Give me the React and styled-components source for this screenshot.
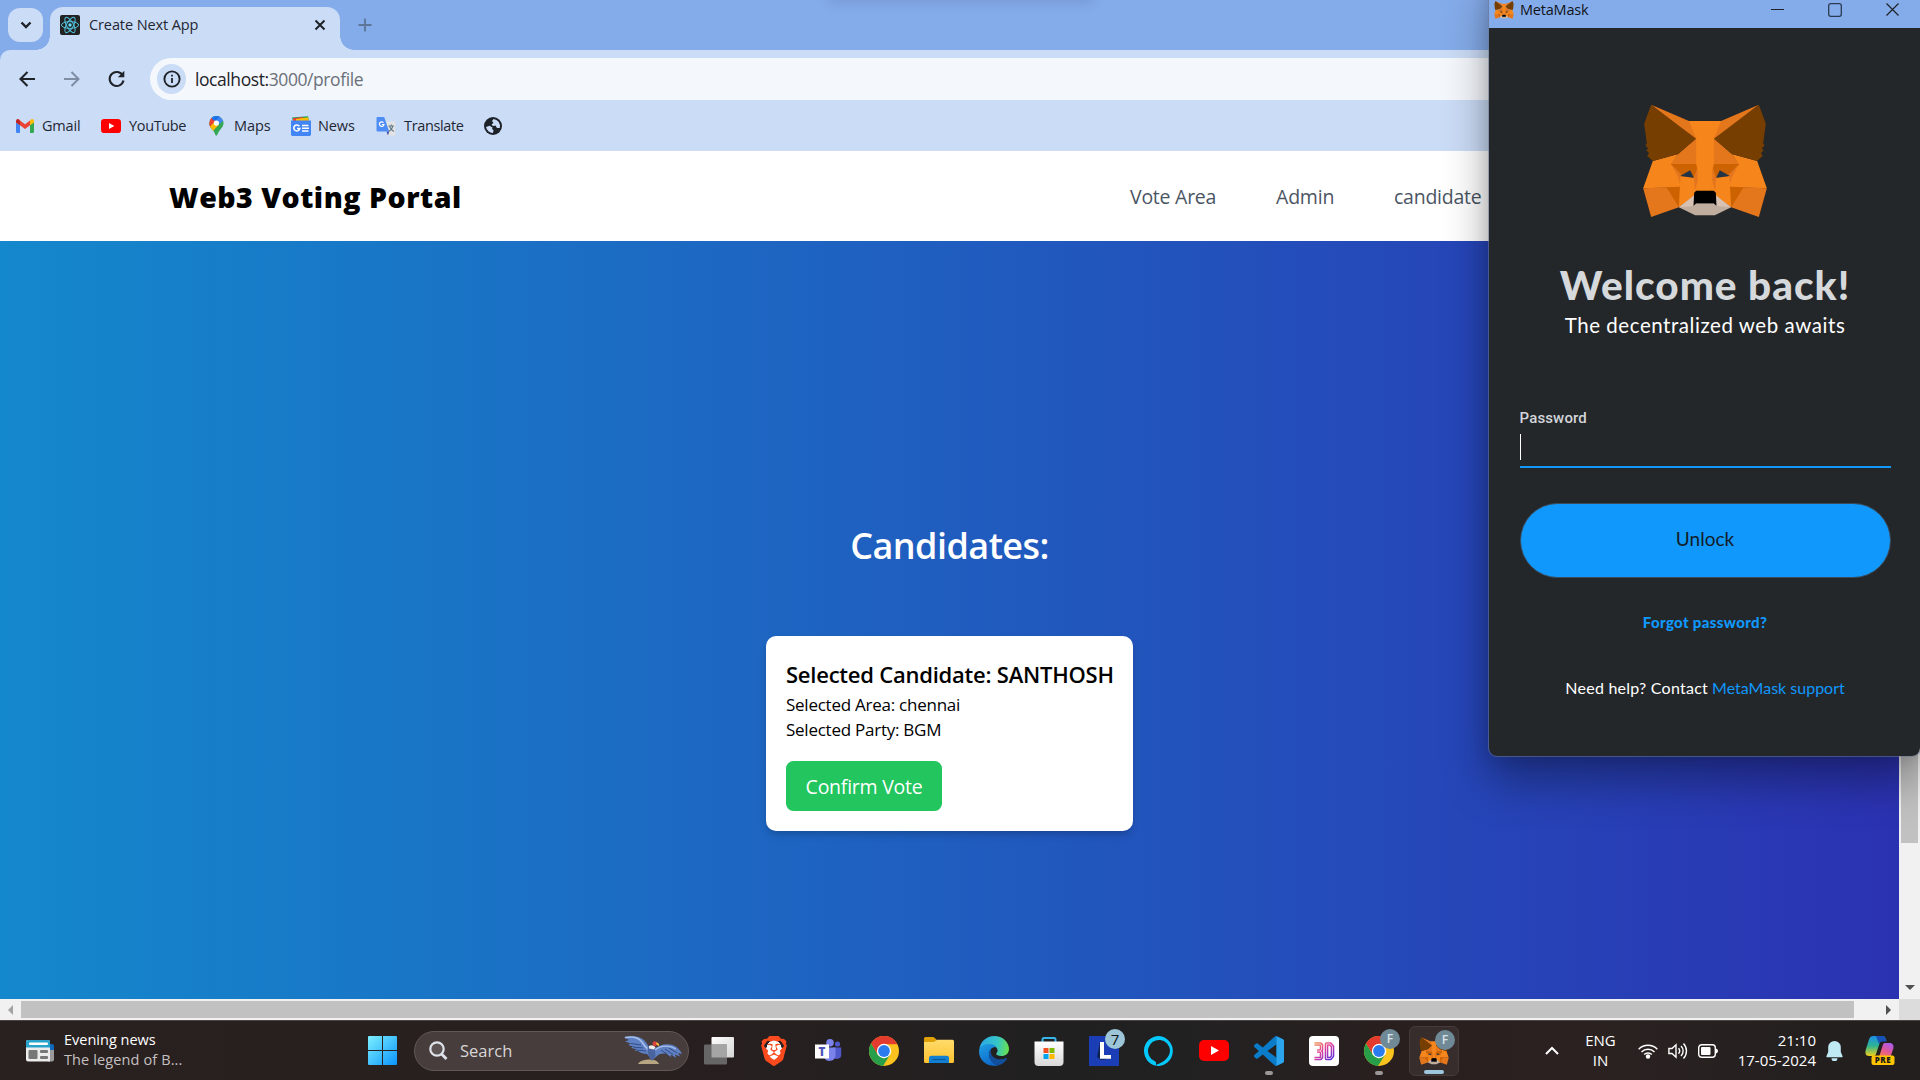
import React from "react";
import styled, { createGlobalStyle, css } from "styled-components";
import { SiBrave } from "react-icons/si";

const ui = `"Open Sans", "Noto Sans", sans-serif`;
const geo = `Lato, "Open Sans", sans-serif`;

const GlobalStyle = createGlobalStyle`
  * { box-sizing: border-box; }
  html, body { margin: 0; padding: 0; overflow: hidden; }
  body { font-family: ${ui}; }
  h1, h2, h3, p { margin: 0; font-weight: inherit; }
  svg { display: block; flex: none; }
  button { font-family: inherit; border: 0; padding: 0; }
`;

const Desktop = styled.div`
  position: relative;
  display: flex;
  flex-direction: column;
  width: 1920px;
  height: 1080px;
  overflow: hidden;
  background: #85acea;
`;

/* ---------- text ---------- */
const Label = styled.span`
  white-space: nowrap;
  line-height: ${(p) => p.$lh || "20px"};
  font-size: ${(p) => p.$size}px;
  letter-spacing: ${(p) => p.$track || 0}px;
  color: ${(p) => p.$color || "inherit"};
  font-weight: ${(p) => p.$weight || 400};
`;

/* ---------- browser chrome ---------- */
const TabStrip = styled.div`
  position: relative;
  display: flex;
  align-items: flex-start;
  height: 50px;
  flex: none;
  padding: 8px 0 0 8px;
  background: #85acea;
`;

const SnapHint = styled.div`
  position: absolute;
  left: 830px;
  top: -12px;
  width: 262px;
  height: 10px;
  border-radius: 8px;
  box-shadow: 0 2px 12px 4px rgba(70, 95, 140, 0.2);
`;

const TabSearch = styled.div`
  display: flex;
  align-items: center;
  justify-content: center;
  width: 35px;
  height: 34px;
  margin-right: 7px;
  border-radius: 12px;
  background: #cbdcf6;
`;

const Tab = styled.div`
  position: relative;
  display: flex;
  align-items: center;
  width: 290px;
  height: 43px;
  margin-top: -1px;
  padding: 0 13px 7px 10px;
  border-radius: 13px 13px 0 0;
  background: #cbdcf6;
  &::before,
  &::after {
    content: "";
    position: absolute;
    bottom: 0;
    width: 14px;
    height: 14px;
  }
  &::before {
    left: -14px;
    background: radial-gradient(circle at 0 0, transparent 13.5px, #cbdcf6 14px);
  }
  &::after {
    right: -14px;
    background: radial-gradient(circle at 100% 0, transparent 13.5px, #cbdcf6 14px);
  }
`;

const TabTitle = styled.div`
  display: flex;
  flex: 1;
  padding-left: 9px;
  color: #1f2733;
`;

const NewTab = styled.div`
  padding: 10px 0 0 18px;
`;

const Toolbar = styled.div`
  display: flex;
  align-items: center;
  height: 58px;
  flex: none;
  padding-left: 18px;
  border-radius: 10px 0 0 0;
  background: #cbdcf6;
`;

const NavIcons = styled.div`
  display: flex;
  align-items: center;
  gap: 27px;
  width: 132px;
`;

const Omnibox = styled.div`
  display: flex;
  align-items: center;
  flex: 1;
  height: 42px;
  padding-left: 7px;
  border-radius: 21px 0 0 21px;
  background: #f4f7fc;
`;

const InfoChip = styled.div`
  display: flex;
  align-items: center;
  justify-content: center;
  width: 29px;
  height: 30px;
  margin-right: 9px;
  border-radius: 15px;
  background: #cbdcf6;
`;

const Bookmarks = styled.div`
  display: flex;
  align-items: center;
  height: 43px;
  flex: none;
  padding: 0 0 7px 16px;
  background: #cbdcf6;
  color: #1f2733;
`;

const Bookmark = styled.div`
  display: flex;
  align-items: center;
  width: ${(p) => p.$width}px;
  gap: ${(p) => p.$gap}px;
`;

/* ---------- web page ---------- */
const Viewport = styled.div`
  display: grid;
  grid-template-columns: 1899px 21px;
  grid-template-rows: 848px 21px;
  flex: none;
`;

const Page = styled.div`
  display: flex;
  flex-direction: column;
  overflow: hidden;
`;

const SiteHeader = styled.header`
  display: flex;
  align-items: center;
  flex: none;
  height: 90px;
  padding: 2px 0 0 169px;
  background: #fff;
`;

const Brand = styled.h1`
  display: flex;
  width: 961px;
  color: #000;
`;

const SiteNav = styled.nav`
  display: flex;
  color: #4b5563;
`;

const NavItem = styled.div`
  display: flex;
  width: ${(p) => p.$width}px;
`;

const Hero = styled.main`
  display: flex;
  flex-direction: column;
  align-items: center;
  flex: 1;
  padding-top: 282px;
  background: linear-gradient(to right, #1488cc, #2b32b2);
`;

const HeroTitle = styled.h2`
  display: flex;
  height: 45px;
  margin-bottom: 68px;
  color: #fff;
`;

const Card = styled.section`
  display: flex;
  flex-direction: column;
  align-items: flex-start;
  width: 367px;
  height: 195px;
  padding: 20px;
  border-radius: 10px;
  background: #fff;
  color: #000;
  box-shadow: 0 5px 8px -1px rgba(0, 0, 0, 0.14), 0 3px 5px -2px rgba(0, 0, 0, 0.1);
`;

const ConfirmButton = styled.button`
  display: flex;
  align-items: center;
  justify-content: center;
  width: 156px;
  height: 50px;
  margin-top: 19px;
  padding-top: 2px;
  border-radius: 7.5px;
  background: #22c55e;
  color: #fff;
`;

const VScroll = styled.div`
  display: flex;
  flex-direction: column;
  justify-content: space-between;
  align-items: center;
  background: #f1f1f1;
  padding-bottom: 9px;
`;

const VThumb = styled.div`
  width: 17px;
  height: 692px;
  background: #c1c1c1;
`;

const HScroll = styled.div`
  display: flex;
  align-items: center;
  justify-content: space-between;
  padding: 0 8px;
  background: #f1f1f1;
`;

const HThumb = styled.div`
  width: 1833px;
  height: 17px;
  margin: 0 auto 0 8px;
  background: #c1c1c1;
`;

const Corner = styled.div`
  background: #dcdcdc;
`;

/* ---------- wallet window ---------- */
const WalletWindow = styled.aside`
  position: absolute;
  left: 1488px;
  top: -2px;
  width: 433px;
  height: 759px;
  display: flex;
  flex-direction: column;
  overflow: hidden;
  border: 1px solid rgba(110, 122, 150, 0.55);
  border-radius: 0 0 9px 9px;
  background: #24272a;
  background-clip: padding-box;
`;

const WalletShadow = styled.div`
  position: absolute;
  left: 1489px;
  top: -30px;
  width: 431px;
  height: 786px;
  border-radius: 9px;
  box-shadow: 0 24px 46px 0 rgba(0, 0, 0, 0.36), 0 0 18px rgba(0, 0, 0, 0.14);
`;

const WalletTitleBar = styled.div`
  display: flex;
  align-items: center;
  flex: none;
  height: 29px;
  padding: 0 21px 8px 5px;
  background: #85acea;
  color: #101418;
`;

const WalletName = styled.div`
  display: flex;
  flex: 1;
  padding-left: 6px;
`;

const WindowButtons = styled.div`
  display: flex;
  align-items: center;
  gap: 44px;
`;

const WalletBody = styled.div`
  display: flex;
  flex-direction: column;
  align-items: center;
  padding: 76px 29px 0 30px;
  font-family: ${geo};
`;

const WalletHeading = styled.h1`
  display: flex;
  margin-top: 43px;
  color: #d6d9dc;
`;

const WalletTagline = styled.p`
  display: flex;
  color: #fff;
`;

const PasswordField = styled.div`
  display: flex;
  flex-direction: column;
  align-items: flex-start;
  width: 371px;
  height: 60px;
  margin-top: 67px;
  border-bottom: 2px solid #1098fc;
  font-family: Roboto, sans-serif;
  color: #d2d5d9;
`;

const Caret = styled.div`
  width: 1px;
  height: 26px;
  margin-top: 6px;
  background: #fff;
`;

const UnlockButton = styled.button`
  display: flex;
  align-items: center;
  justify-content: center;
  width: 371px;
  height: 75px;
  margin-top: 35px;
  padding-bottom: 4px;
  border: 1px solid #3b4a59;
  border-radius: 38px;
  background: #1098fc;
  color: #141d28;
`;

const WalletLink = styled.div`
  display: flex;
  margin-top: ${(p) => p.$top}px;
  gap: 4px;
  color: #1098fc;
`;

/* ---------- taskbar ---------- */
const Taskbar = styled.footer`
  display: flex;
  align-items: center;
  flex: 1;
  border-top: 1px solid #4a4544;
  background: linear-gradient(to right, #292020, #281f1f 35%, #212021 54%, #222122 62%, #2a1f1e 74%, #2a2221 84%, #231f1f 96%);
  color: #fff;
`;

const Widgets = styled.div`
  display: flex;
  align-items: center;
  gap: 10px;
  width: 368px;
  padding-left: 26px;
`;

const Stack = styled.div`
  display: flex;
  flex-direction: column;
  align-items: ${(p) => p.$align || "flex-start"};
  padding-bottom: 2px;
`;

const SearchBox = styled.div`
  display: flex;
  align-items: center;
  width: 275px;
  height: 40px;
  margin: 0 2px 0 17px;
  padding: 0 6px 0 14px;
  border: 1px solid #605857;
  border-radius: 20px;
  background: #463d3c;
`;

const SearchText = styled.div`
  display: flex;
  flex: 1;
  padding-left: 12px;
  color: #d9d6d6;
`;

const TaskIcons = styled.div`
  display: flex;
  align-items: center;
`;

const TaskButton = styled.div`
  position: relative;
  display: flex;
  align-items: center;
  justify-content: center;
  width: 55px;
  height: 50px;
  ${(p) =>
    p.$active &&
    css`
      width: 50px;
      margin-left: 3px;
      border: 1px solid #453b3a;
      border-radius: 6px;
      background: #372d2c;
    `}
`;

const Indicator = styled.i`
  position: absolute;
  bottom: 1px;
  left: 50%;
  width: ${(p) => (p.$wide ? 20 : 8)}px;
  height: 4px;
  transform: translateX(-50%);
  border-radius: 2px;
  background: ${(p) => (p.$wide ? "#9dc6dd" : "#9a9796")};
`;

const Badge = styled.b`
  position: absolute;
  top: 3px;
  right: ${(p) => p.$right}px;
  display: flex;
  align-items: center;
  justify-content: center;
  width: 20px;
  height: 20px;
  border-radius: 50%;
  font-weight: ${(p) => (p.$count ? 400 : 600)};
  font-size: ${(p) => (p.$count ? 15 : 12)}px;
  background: ${(p) => (p.$count ? "#9cc5d8" : "#6f8a96")};
  color: ${(p) => (p.$count ? "#10151a" : "#dbe3e7")};
`;

const Tray = styled.div`
  display: flex;
  align-items: center;
  margin-left: auto;
  padding-right: 25px;
`;

const TraySlot = styled.div`
  display: flex;
  align-items: center;
  gap: 10px;
  margin-left: ${(p) => p.$before}px;
`;

/* ---------- icons ---------- */
const FoxHalf = () => (
  <g>
    <path d="M97 44 212 94 236 146 230 150Z" fill="#e4761b" />
    <path d="M178 192 230 146 240 146 240 224 155 222Z" fill="#e4761b" />
    <path d="M102 213 178 192 157 222 186 256 187 292 73 295Z" fill="#f6851b" />
    <path d="M157 222H240L238 270 183 262Z" fill="#cd6200" />
    <path d="M157 222 188 254 186 292 178 262Z" fill="#e4751f" />
    <path d="M73 295 186 290 180 352 97 381Z" fill="#e4761b" />
    <path d="M143 292 187 290 180 352Z" fill="#cd6200" />
    <path d="M185 258 225 264 240 270V310L180 352Z" fill="#f6851b" />
    <path d="M184 258 214 241 225 263Z" fill="#233447" />
    <path d="M225 264 236 232 238 268 228 303Z" fill="#e4751f" />
    <path d="M180 352 228 314 230 350 200 358Z" fill="#d7c1b3" />
    <path
      d="M97 44 232 146 178 192 102 213 85 197 91 190 82 181 88 176 80 166 84 160 76 101Z"
      fill="#763e00"
    />
  </g>
);

const Fox = ({ width, height }) => (
  <svg width={width} height={height} viewBox="69.500 42 378 342" preserveAspectRatio="none">
    <FoxHalf />
    <g transform="translate(517 0) scale(-1 1)">
      <FoxHalf />
    </g>
    <path d="M210 93H307L285 146V222L281 240 279 303H238L236 240 232 222V146Z" fill="#f6851b" />
    <path d="M180 352 224 348 232 340H285L293 348 337 352 288 376H229Z" fill="#c0ad9e" />
    <path d="M232 302H285L291 308 293 348 285 340H232L224 348 226 308Z" fill="#000" />
  </svg>
);

const ReactMark = () => (
  <svg width="20" height="20" viewBox="0 0 20 20">
    <rect width="20" height="20" rx="2" fill="#222" />
    <g fill="none" stroke="#53c1dc" strokeWidth="1">
      <ellipse cx="10" cy="10" rx="8.6" ry="3.4" />
      <ellipse cx="10" cy="10" rx="8.6" ry="3.4" transform="rotate(60 10 10)" />
      <ellipse cx="10" cy="10" rx="8.6" ry="3.4" transform="rotate(120 10 10)" />
    </g>
    <circle cx="10" cy="10" r="1.7" fill="#61dafb" />
  </svg>
);

const Gmail = () => (
  <svg width="18" height="14" viewBox="0 0 18 14">
    <path d="M0 3V12.7A1.3 1.3 0 0 0 1.3 14H4V6Z" fill="#4285f4" />
    <path d="M18 3V12.7A1.3 1.3 0 0 1 16.7 14H14V6Z" fill="#34a853" />
    <path d="M4 1.4 9 5.2 14 1.4V6.2L9 10 4 6.2Z" fill="#ea4335" />
    <path d="M0 2.2C0 .2 2.2-.6 3.6.9L4 1.4V6.2L0 3.4Z" fill="#c5221f" />
    <path d="M18 2.2C18 .2 15.8-.6 14.4.9L14 1.4V6.2L18 3.4Z" fill="#fbbc04" />
  </svg>
);

const YouTube = ({ width, height }) => (
  <svg width={width} height={height} viewBox="0 0 30 21" preserveAspectRatio="none">
    <rect width="30" height="21" rx="5" fill="#f00" />
    <path d="M12 6 20 10.5 12 15Z" fill="#fff" />
  </svg>
);

const MapsPin = () => (
  <svg width="15" height="20" viewBox="0 0 15 20">
    <clipPath id="pin">
      <path d="M7.5 0A7.2 7.2 0 0 1 14.5 7.2C14.5 11 11.6 12.8 9.6 16 8.6 17.6 8.4 19.7 7.2 19.7 6.2 19.7 6 17.5 5 15.8 3.4 13 .3 11.3.3 7.2A7.2 7.2 0 0 1 7.5 0Z" />
    </clipPath>
    <g clipPath="url(#pin)">
      <rect width="15" height="20" fill="#34a853" />
      <path d="M0 0H15V4L9 9 2 2Z" fill="#4285f4" />
      <path d="M-1 1 3 2 7.5 6 1 14-1 10Z" fill="#ea4335" />
      <path d="M0 11.5 6 5.5 9.5 9 3 16Z" fill="#fbbc04" />
      <path d="M2 0H11L7 4.5 4 4.2Z" fill="#1a73e8" />
    </g>
    <circle cx="7.4" cy="7.1" r="2.6" fill="#fff" />
  </svg>
);

const News = () => (
  <svg width="20" height="20" viewBox="0 0 20 20">
    <path d="M1 1.5 17 .2 18 5H2Z" fill="#0c9d58" />
    <path d="M2 2.2 12 1 14 5H2Z" fill="#ea4335" />
    <path d="M5 3 17 1.2 18 5H5Z" fill="#fbbc04" />
    <path d="M0 4.4H20V18.6A1.4 1.4 0 0 1 18.6 20H1.4A1.4 1.4 0 0 1 0 18.6Z" fill="#4285f4" />
    <path d="M8.3 10.2A3 3 0 1 0 8.8 12.5H6" fill="none" stroke="#fff" strokeWidth="1.6" />
    <path d="M11 9.6H17.5M11 12.3H18M11 15H17.5" stroke="#fff" strokeWidth="1.5" />
  </svg>
);

const Translate = () => (
  <svg width="20" height="19" viewBox="0 0 20 19">
    <path d="M8 4.5H18.2A1 1 0 0 1 19.2 5.5V17.5A1 1 0 0 1 18.2 18.5H11.5Z" fill="#e3e3e3" />
    <path d="M12.5 9H18M15.2 7.6V9M16.8 9C16.4 11.5 15 13.3 12.5 14.6M13.6 9.5C14.5 12 16 13.6 18 14.6" fill="none" stroke="#607988" strokeWidth="1.1" />
    <path d="M10.5 14.6H13.2L12 18.5Z" fill="#3949ab" />
    <path d="M1.5 0H8.2L13.2 14.6H1.5A1 1 0 0 1 .5 13.6V1A1 1 0 0 1 1.5 0Z" fill="#4f8df6" />
    <path d="M7.5 5.6A2.3 2.3 0 1 0 8 7.5H5.8" fill="none" stroke="#fff" strokeWidth="1.2" />
  </svg>
);

const Globe = () => (
  <svg width="18" height="18" viewBox="0 0 18 18">
    <circle cx="9" cy="9" r="9" fill="#1d2229" />
    <path d="M2 10 5.5 8.7 8.5 10.5 8 12 9.5 13 9 16A7.2 7.2 0 0 1 2 10ZM9.5 2 8 4 9.5 6 7.5 7.5 9 9 11.5 8.6 13 11H15.8A7.2 7.2 0 0 0 9.5 2Z" fill="#cbdcf6" />
  </svg>
);

const Line = ({ size = 20, h, d, color = "#1f2328", w = 2 }) => (
  <svg width={size} height={h || size} viewBox={`0 0 ${size} ${h || size}`} fill="none" stroke={color} strokeWidth={w}>
    <path d={d} />
  </svg>
);

const Reload = () => (
  <svg width="18" height="18" viewBox="0 0 18 18">
    <path d="M14.8 5.6A7 7 0 1 0 15.5 10.5" fill="none" stroke="#1f2328" strokeWidth="2.1" />
    <path d="M16.3.8V7.2H9.8Z" fill="#1f2328" />
  </svg>
);

const Info = () => (
  <svg width="18" height="18" viewBox="0 0 18 18">
    <circle cx="9" cy="9" r="7.6" fill="none" stroke="#1f2328" strokeWidth="1.9" />
    <path d="M9 8V13M9 4.8V6.6" stroke="#1f2328" strokeWidth="1.8" />
  </svg>
);

const NewsWidget = () => (
  <svg width="28" height="22" viewBox="0 0 28 22">
    <path d="M22 4H26A2 2 0 0 1 28 6V11H22Z" fill="#1268b8" />
    <path d="M22 10H28V19A2 2 0 0 1 26 21.5H22Z" fill="#9a9a9a" />
    <path d="M0 2A2 2 0 0 1 2 0H22A2 2 0 0 1 24 2V21.5H2A2 2 0 0 1 0 19.5Z" fill="#ececec" />
    <path d="M0 2A2 2 0 0 1 2 0H22A2 2 0 0 1 24 2V7.5H0Z" fill="#2aa3cb" />
    <rect x="3" y="2.5" width="19" height="2.6" rx="1" fill="#fff" />
    <rect x="2.5" y="10" width="9" height="9" rx="1" fill="#777" />
    <rect x="14" y="10" width="8" height="3" rx="1" fill="#777" />
    <rect x="14" y="16" width="8" height="3" rx="1" fill="#777" />
  </svg>
);

const WindowsLogo = () => (
  <svg width="29" height="29" viewBox="0 0 29 29">
    <linearGradient id="win" x1="0" y1="0" x2="29" y2="29" gradientUnits="userSpaceOnUse">
      <stop offset="0" stopColor="#7df0ff" />
      <stop offset="1" stopColor="#0a94fb" />
    </linearGradient>
    <path d="M1 0H14V14H0V1A1 1 0 0 1 1 0ZM15 0H28A1 1 0 0 1 29 1V14H15ZM0 15H14V29H1A1 1 0 0 1 0 28ZM15 15H29V28A1 1 0 0 1 28 29H15Z" fill="url(#win)" />
  </svg>
);

const SearchGlass = () => (
  <svg width="19" height="20" viewBox="0 0 19 20" fill="none" stroke="#dfe3ea">
    <circle cx="8" cy="8" r="6.7" fill="#5c5454" strokeWidth="2.2" />
    <path d="M12.6 13 17.5 18" strokeWidth="2.8" />
  </svg>
);

const Vulture = () => (
  <svg width="58" height="29" viewBox="0 0 58 29">
    <path d="M14 28C16 24.5 21 23.5 26 23.5 31 23.5 34 25.5 35 28Z" fill="#b8a582" />
    <path d="M0 1.5C8-1 16 0 20 4 23 7 24 10 26 12L30 13C36 8 44 7 50 9.5 54 11.5 57 15 58 18L54 17 56 20.5 51 18.5 52 22 47 18.5 47 21 42 17.5C38 17 34 18 32 21L28 24 23 18C20 18 16 17 14 15L11 15 12 13 7 12 9 10.5 4 9 7 7.5 1 5.5 5 4Z" fill="#5f80c3" />
    <path d="M1 1.5C9 0 15 2 18 6 20 9 22 12 25 14" fill="none" stroke="#a9c0ea" strokeWidth="1.6" />
    <path d="M7 7.5 17 9M9 11 19 12M12 14 22 15M45 12 53 17M41 13 49 18.5M37 14 43 18" stroke="#334d86" strokeWidth="1" />
    <path d="M31 14C37 9 46 9 52 13" fill="none" stroke="#a9c0ea" strokeWidth="1.4" />
    <path d="M23.5 12C25 10 30 10 31 13L31.5 20 28 25 24.5 20Z" fill="#4a64a0" />
    <path d="M25 10C27 8.5 30 9 31.5 11.5L30 13.5 25 12.5Z" fill="#f0ece8" />
    <path d="M28.5 6.5C30 4.5 33 5 33.5 8L31 10.5 29 9.5Z" fill="#d9433c" />
    <path d="M32 6.3C34.5 6.5 35.5 8 35 10.3L32.5 8.8Z" fill="#f5b83d" />
  </svg>
);

const TaskView = () => (
  <svg width="30" height="28" viewBox="0 0 30 28">
    <linearGradient id="tv" x1="0" y1="0" x2="1" y2="1">
      <stop offset="0" stopColor="#fff" />
      <stop offset="1" stopColor="#d5d5d5" />
    </linearGradient>
    <rect x="7.5" y="0" width="22.5" height="20.5" rx="1" fill="url(#tv)" />
    <rect x="0" y="7.5" width="23" height="20" rx="1" fill="#666" />
    <rect x="7.5" y="7.5" width="15.5" height="13" fill="#a5a5a5" />
  </svg>
);

const BraveBox = styled.div`
  display: flex;
  align-items: center;
  justify-content: center;
  width: 26px;
  height: 30px;
  color: #fb4a1d;
  background: radial-gradient(ellipse 8px 10px at 50% 47%, #fff 95%, transparent 100%);
`;

const Teams = () => (
  <svg width="27" height="24" viewBox="0 0 27 24">
    <circle cx="22.5" cy="5" r="2.6" fill="#5059c9" />
    <path d="M18 8.5H26.2V15.5A4.2 4.2 0 0 1 18 17Z" fill="#5059c9" />
    <circle cx="15" cy="3.8" r="3.8" fill="#7b83eb" />
    <path d="M9 8.5H20.5V17A6 6 0 0 1 9 18Z" fill="#7b83eb" />
    <rect x="0" y="5.5" width="14" height="14" fill="#fff" />
    <text x="7" y="16.5" textAnchor="middle" fontFamily="Open Sans, sans-serif" fontWeight="800" fontSize="11.5" fill="#4b53bc">T</text>
  </svg>
);

const Chrome = () => (
  <svg width="30" height="30" viewBox="0 0 30 30">
    <circle cx="15" cy="15" r="15" fill="#fcc31e" />
    <path d="M15 15 2 7.5A15 15 0 0 1 28 7.5L28 8.3H15Z" fill="#e33b2e" />
    <path d="M2 7.5 8.5 18.5 15 8.2Z" fill="#e33b2e" />
    <path d="M2 7.5 8.8 18.8 15 22.5 21.5 18 14 29.9A15 15 0 0 1 2 7.5Z" fill="#269e4a" />
    <circle cx="15" cy="15" r="7.2" fill="#fff" />
    <circle cx="15" cy="15" r="5.9" fill="#2a7bee" />
  </svg>
);

const Folder = () => (
  <svg width="30" height="27" viewBox="0 0 30 27">
    <linearGradient id="fold" x1="0" y1="0" x2="0" y2="1">
      <stop offset="0" stopColor="#ffdc6b" />
      <stop offset="1" stopColor="#fdc12f" />
    </linearGradient>
    <path d="M0 1.5A1.5 1.5 0 0 1 1.5 0H9.5L12.5 2.5V8H0Z" fill="#e0a008" />
    <path d="M0 5H10L13 2.8H28.5A1.5 1.5 0 0 1 30 4.3V24.5A1.5 1.5 0 0 1 28.5 26H1.5A1.5 1.5 0 0 1 0 24.5Z" fill="url(#fold)" />
    <path d="M5 26V21A2.2 2.2 0 0 1 7.2 18.8H22.8A2.2 2.2 0 0 1 25 21V26Z" fill="#1280d2" />
    <path d="M8.5 22.5H21.5" stroke="#0b5798" strokeWidth="1.2" />
  </svg>
);

const Edge = () => (
  <svg width="30" height="30" viewBox="0 0 30 30">
    <linearGradient id="e1" x1="0" y1="0.3" x2="1" y2="0.4">
      <stop offset="0" stopColor="#2aa8e6" />
      <stop offset="0.6" stopColor="#36c5c9" />
      <stop offset="1" stopColor="#66e04f" />
    </linearGradient>
    <linearGradient id="e2" x1="0" y1="0" x2="0.5" y2="1">
      <stop offset="0" stopColor="#1f9fe4" />
      <stop offset="1" stopColor="#0e69c9" />
    </linearGradient>
    <path d="M.3 13C1.5 5.500 7.500 0 15 0 24 0 30 6.300 30 13 30 17.500 26.500 20 22.500 20 19 20 17.300 18.800 17.300 18 17.300 17.200 18.600 16.500 18.600 14.600 18.600 11.500 15.500 9 10.500 9 5.500 9 1.500 11 .3 13Z" fill="url(#e1)" />
    <path d="M.3 13C2 10 5.500 8 10 8 13.500 8 16 9.300 17 11 13 11 10.200 13.800 10.200 18 10.200 24 15 29 20 29 12 32 0 27 0 15Z" fill="url(#e2)" />
    <path d="M12.300 12.600C9 16 9.200 21.500 12.500 25.500 14.600 28.200 18 29.500 20.500 29 24 27.800 26.500 25.500 28 23 28.400 22.200 27.800 21.800 27 22.200 21 25 13 22.500 12 17 11.700 15.500 11.800 14 12.300 12.600Z" fill="#124f9c" />
  </svg>
);

const Store = () => (
  <svg width="30" height="30" viewBox="0 0 30 30">
    <linearGradient id="st" x1="0" y1="0" x2="0" y2="1">
      <stop offset="0" stopColor="#fff" />
      <stop offset="1" stopColor="#d8d8d8" />
    </linearGradient>
    <path d="M8.500 7V3.500A1.500 1.500 0 0 1 10 2H20A1.500 1.500 0 0 1 21.500 3.500V7" fill="none" stroke="#35b7ea" strokeWidth="2" />
    <path d="M.5 5.500H29.500V26A4 4 0 0 1 25.500 30H4.500A4 4 0 0 1 .5 26Z" fill="url(#st)" />
    <path d="M9.500 12H14.500V17H9.500Z" fill="#f25022" />
    <path d="M15.500 12H20.500V17H15.500Z" fill="#7fba00" />
    <path d="M9.500 18H14.500V23H9.500Z" fill="#00a4ef" />
    <path d="M15.500 18H20.500V23H15.500Z" fill="#ffb900" />
  </svg>
);

const LApp = () => (
  <svg width="30" height="30" viewBox="0 0 30 30">
    <rect width="30" height="30" fill="#1b3db5" />
    <path d="M11 6 8 21 12 24 21 22.500 12 19Z" fill="#0d2352" />
    <path d="M11 6H15V19H22V22.800H11Z" fill="#fff" />
  </svg>
);

const Alexa = () => (
  <svg width="30" height="30" viewBox="0 0 30 30">
    <path d="M15 0A15 15 0 0 0 12 29.700V27C12 26 11.300 25.500 10.500 25A11 11 0 1 1 26 14.500C26 21 19 27 12.500 28.500L12.500 30A15 15 0 1 0 15 0Z" fill="#05c8fb" />
  </svg>
);

const VSCode = () => (
  <svg width="30" height="30" viewBox="0 0 24 24">
    <path d="M23.150 2.587 18.210.210a1.494 1.494 0 0 0-1.705.290l-9.460 8.630-4.120-3.128a.999.999 0 0 0-1.276.057L.327 7.261A1 1 0 0 0 .326 8.740L3.899 12 .326 15.260a1 1 0 0 0 .001 1.479L1.650 17.940a.999.999 0 0 0 1.276.057l4.120-3.128 9.460 8.630a1.492 1.492 0 0 0 1.704.290l4.942-2.377A1.500 1.500 0 0 0 24 20.060V3.939a1.500 1.500 0 0 0-.850-1.352zm-5.146 14.861L10.826 12l7.178-5.448v10.896z" fill="#0b7cc9" />
    <path d="M18 .150 23.150 2.587A1.500 1.500 0 0 1 24 3.940V20.060A1.500 1.500 0 0 1 23.150 21.400L18 23.850Z" fill="#2aa5ee" />
  </svg>
);

const ThreeD = () => (
  <svg width="30" height="30" viewBox="0 0 30 30">
    <linearGradient id="td" x1="4" y1="6" x2="20" y2="26" gradientUnits="userSpaceOnUse">
      <stop offset="0" stopColor="#f2a33c" />
      <stop offset="0.5" stopColor="#e0409c" />
      <stop offset="1" stopColor="#5a2be0" />
    </linearGradient>
    <rect width="30" height="30" rx="4" fill="#fff" />
    <g fill="none" stroke="url(#td)" strokeWidth="3.6" strokeLinejoin="round">
      <path d="M5.500 8H11.500L12.500 9V14L11 15H8M11 15 12.500 16V21.500L11.500 22.500H5.500" />
      <path d="M17.500 8H21.500L23.500 10.500V20L21.500 22.500H17.500Z" />
    </g>
    <g fill="none" stroke="#fff" strokeWidth=".7">
      <path d="M5.500 8H11.500L12.500 9V14L11 15H8M11 15 12.500 16V21.500L11.500 22.500H5.500" />
      <path d="M17.500 8H21.500L23.500 10.500V20L21.500 22.500H17.500Z" />
    </g>
  </svg>
);

const Wifi = () => (
  <svg width="20" height="16" viewBox="0 0 20 16" fill="none" stroke="#fff" strokeWidth="1.5">
    <path d="M.7 6.200A13 13 0 0 1 19.300 6.200M3.500 9A9.200 9.200 0 0 1 16.500 9M6.200 11.500A5.500 5.500 0 0 1 13.800 11.500" />
    <circle cx="10" cy="13.6" r="1.5" fill="#fff" />
  </svg>
);

const Volume = () => (
  <svg width="20" height="18" viewBox="0 0 20 18" fill="none" stroke="#fff" strokeWidth="1.4">
    <path d="M.9 6.500H4L8 2.800V15.200L4 11.500H.9Z" />
    <path d="M10.500 6.300A4 4 0 0 1 10.500 11.700M13 4A7 7 0 0 1 13 14M15.500 1.500A11 11 0 0 1 15.500 16.500" />
  </svg>
);

const Battery = () => (
  <svg width="20" height="14" viewBox="0 0 20 14">
    <rect x=".7" y=".7" width="16.6" height="12.6" rx="3" fill="none" stroke="#fff" strokeWidth="1.4" />
    <rect x="3" y="3" width="9.5" height="8" rx="1" fill="#fff" />
    <path d="M18 4.500C19.300 5 20 5.800 20 7S19.300 9 18 9.500Z" fill="#fff" />
  </svg>
);

const Bell = () => (
  <svg width="17" height="20" viewBox="0 0 17 20" fill="#bfe9f3">
    <path d="M8.500 0A6.300 6.300 0 0 1 14.800 6.300V11L16.600 15.300A.8.8 0 0 1 16 16.300H1A.8.8 0 0 1 .4 15.300L2.200 11V6.300A6.300 6.300 0 0 1 8.500 0Z" />
    <path d="M5.500 17.300H11.500A3 3 0 0 1 5.500 17.300Z" />
  </svg>
);

const Copilot = () => (
  <svg width="30" height="29" viewBox="0 0 30 29">
    <linearGradient id="c1" x1="0.3" y1="0" x2="0.3" y2="1">
      <stop offset="0" stopColor="#1b8fe8" />
      <stop offset="0.5" stopColor="#2fb48f" />
      <stop offset="1" stopColor="#f0d019" />
    </linearGradient>
    <linearGradient id="c2" x1="0.8" y1="0" x2="0.2" y2="1">
      <stop offset="0" stopColor="#a95cf0" />
      <stop offset="0.5" stopColor="#e0569b" />
      <stop offset="1" stopColor="#fb7b4c" />
    </linearGradient>
    <path d="M8.500 0H17C20 0 20.500 2 21.500 5H17C15.500 5 15 6 14.500 7.500L11 18C10.500 19.500 9.500 20 8 20H4C.5 20 0 17 .7 14L4 3.500C4.800 1 6 0 8.500 0Z" fill="url(#c1)" />
    <path d="M11 0H17C20 0 20.500 2 21.500 5.500H17C15 5.500 14.500 7 14 8Z" fill="#1651b5" />
    <path d="M20 7H24.500C28 7 29 9.500 28.300 12.500L25.500 21H12.500C14 21 14.500 19.500 15 18L18 8.500C18.400 7.500 19 7 20 7Z" fill="url(#c2)" />
    <rect x="6.5" y="19.5" width="23" height="9.5" rx="2" fill="#ffc400" />
    <text x="18" y="27.2" textAnchor="middle" fontFamily="Open Sans, sans-serif" fontWeight="800" fontSize="8" letterSpacing=".6" fill="#1a1a1a">PRE</text>
  </svg>
);

const tasks = [
  { icon: <TaskView /> },
  { icon: <BraveBox><SiBrave size={30} /></BraveBox> },
  { icon: <Teams /> },
  { icon: <Chrome /> },
  { icon: <Folder /> },
  { icon: <Edge /> },
  { icon: <Store /> },
  { icon: <LApp />, badge: "7" },
  { icon: <Alexa /> },
  { icon: <YouTube width={30} height={21} /> },
  { icon: <VSCode />, open: true },
  { icon: <ThreeD /> },
  { icon: <Chrome />, badge: "F", open: true },
];

const bookmarks = [
  { icon: <Gmail />, label: "Gmail", width: 85, gap: 8, track: -0.2 },
  { icon: <YouTube width={20} height={14} />, label: "YouTube", width: 108, gap: 8, track: -0.35 },
  { icon: <MapsPin />, label: "Maps", width: 82, gap: 10, track: -0.1 },
  { icon: <News />, label: "News", width: 85, gap: 7, track: -0.1 },
  { icon: <Translate />, label: "Translate", width: 108, gap: 8, track: -0.35 },
  { icon: <Globe />, width: 18, gap: 0 },
];

function BrowserChrome() {
  return (
    <>
      <TabStrip>
        <SnapHint />
        <TabSearch>
          <Line size={12} h={8} d="M1.5 1.5 6 6 10.5 1.5" w={2.4} />
        </TabSearch>
        <Tab>
          <ReactMark />
          <TabTitle><Label $size={14.5} $track={-0.1}>Create Next App</Label></TabTitle>
          <Line size={14} d="M2.5 2.5 11.5 11.5M11.5 2.5 2.5 11.5" />
        </Tab>
        <NewTab>
          <Line size={14} d="M7 .5V13.5M.5 7H13.5" color="#5d7596" w={1.8} />
        </NewTab>
      </TabStrip>
      <Toolbar>
        <NavIcons>
          <Line size={18} d="M17 9H3M9.5 2 2.5 9 9.5 16" w={2.1} />
          <Line size={18} d="M1 9H15M8.5 2 15.5 9 8.5 16" w={2} color="#7f8da3" />
          <Reload />
        </NavIcons>
        <Omnibox>
          <InfoChip><Info /></InfoChip>
          <Label $size={17.5} $track={-0.42} $color="#1f2328">localhost:</Label>
          <Label $size={17.5} $track={-0.42} $color="#6a7078">3000/profile</Label>
        </Omnibox>
      </Toolbar>
      <Bookmarks>
        {bookmarks.map((b, i) => (
          <Bookmark key={i} $width={b.width} $gap={b.gap}>
            {b.icon}
            {b.label && <Label $size={14.5} $track={b.track}>{b.label}</Label>}
          </Bookmark>
        ))}
      </Bookmarks>
    </>
  );
}

function VotingPage() {
  return (
    <Viewport>
      <Page>
        <SiteHeader>
          <Brand><Label $size={28.5} $weight={800} $lh="40px" $track={0.52}>Web3 Voting Portal</Label></Brand>
          <SiteNav>
            <NavItem $width={146}><Label $size={19.5} $lh="30px" $track={-0.25}>Vote Area</Label></NavItem>
            <NavItem $width={118}><Label $size={19.5} $lh="30px" $track={-0.2}>Admin</Label></NavItem>
            <NavItem $width={100}><Label $size={19.5} $lh="30px" $track={-0.25}>candidate</Label></NavItem>
          </SiteNav>
        </SiteHeader>
        <Hero>
          <HeroTitle><Label $size={36} $weight={600} $lh="45px" $track={-0.55}>Candidates:</Label></HeroTitle>
          <Card>
            <Label $size={22} $weight={600} $lh="36px" $track={-0.23}>Selected Candidate: SANTHOSH</Label>
            <Label $size={17} $lh="25px" $track={-0.25}>Selected Area: chennai</Label>
            <Label $size={17} $lh="25px" $track={-0.25}>Selected Party: BGM</Label>
            <ConfirmButton><Label $size={19.5} $lh="30px" $track={-0.25}>Confirm Vote</Label></ConfirmButton>
          </Card>
        </Hero>
      </Page>
      <VScroll>
        <VThumb />
        <svg width="10" height="5" viewBox="0 0 10 5"><path d="M0 0H10L5 5Z" fill="#505050" /></svg>
      </VScroll>
      <HScroll>
        <svg width="5" height="10" viewBox="0 0 5 10"><path d="M5 0V10L0 5Z" fill="#a3a3a3" /></svg>
        <HThumb />
        <svg width="5" height="10" viewBox="0 0 5 10"><path d="M0 0V10L5 5Z" fill="#505050" /></svg>
      </HScroll>
      <Corner />
    </Viewport>
  );
}

function Wallet() {
  return (
    <>
      <WalletShadow />
      <WalletWindow>
        <WalletTitleBar>
          <Fox width={20} height={18} />
          <WalletName><Label $size={14.5} $track={-0.2}>MetaMask</Label></WalletName>
          <WindowButtons>
            <Line size={13} d="M0 6.5H13" w={1} />
            <svg width="14" height="14" viewBox="0 0 14 14">
              <rect x=".7" y=".7" width="12.6" height="12.6" rx="2" fill="none" stroke="#2b3a52" strokeWidth="1.3" />
            </svg>
            <Line size={13} d="M.5.5 12.5 12.5M12.5.5.5 12.5" w={1.2} />
          </WindowButtons>
        </WalletTitleBar>
        <WalletBody>
          <Fox width={126} height={114} />
          <WalletHeading><Label $size={40.5} $weight={900} $lh="48px" $track={1}>Welcome back!</Label></WalletHeading>
          <WalletTagline><Label $size={20.5} $lh="32px" $track={0.55}>The decentralized web awaits</Label></WalletTagline>
          <PasswordField>
            <Label $size={15} $weight={500} $track={0.15}>Password</Label>
            <Caret />
          </PasswordField>
          <UnlockButton><Label $size={19} $lh="30px">Unlock</Label></UnlockButton>
          <WalletLink $top={34}><Label $size={15} $weight={900} $track={0.35}>Forgot password?</Label></WalletLink>
          <WalletLink $top={46}>
            <Label $size={16} $color="#fff" $track={0.25}>Need help? Contact</Label>
            <Label $size={16}>MetaMask support</Label>
          </WalletLink>
        </WalletBody>
      </WalletWindow>
    </>
  );
}

function SystemTaskbar() {
  return (
    <Taskbar>
      <Widgets>
        <NewsWidget />
        <Stack>
          <Label $size={14.5}>Evening news</Label>
          <Label $size={14.5} $color="#c5c0c0" $track={0.12}>The legend of B...</Label>
        </Stack>
      </Widgets>
      <WindowsLogo />
      <SearchBox>
        <SearchGlass />
        <SearchText><Label $size={16.5}>Search</Label></SearchText>
        <Vulture />
      </SearchBox>
      <TaskIcons>
        {tasks.map((t, i) => (
          <TaskButton key={i}>
            {t.icon}
            {t.badge && <Badge $count={t.badge === "7"} $right={6}>{t.badge}</Badge>}
            {t.open && <Indicator />}
          </TaskButton>
        ))}
        <TaskButton $active>
          <Fox width={30} height={28} />
          <Badge $right={3}>F</Badge>
          <Indicator $wide />
        </TaskButton>
      </TaskIcons>
      <Tray>
        <Line size={14} h={9} d="M1 8 7 2 13 8" color="#fff" w={2} />
        <TraySlot $before={26}>
          <Stack $align="center">
            <Label $size={15}>ENG</Label>
            <Label $size={15}>IN</Label>
          </Stack>
        </TraySlot>
        <TraySlot $before={22}><Wifi /><Volume /><Battery /></TraySlot>
        <TraySlot $before={20}>
          <Stack $align="flex-end">
            <Label $size={15}>21:10</Label>
            <Label $size={15}>17-05-2024</Label>
          </Stack>
        </TraySlot>
        <TraySlot $before={10}><Bell /></TraySlot>
        <TraySlot $before={22}><Copilot /></TraySlot>
      </Tray>
    </Taskbar>
  );
}

export default function App() {
  return (
    <Desktop>
      <GlobalStyle />
      <BrowserChrome />
      <VotingPage />
      <SystemTaskbar />
      <Wallet />
    </Desktop>
  );
}
